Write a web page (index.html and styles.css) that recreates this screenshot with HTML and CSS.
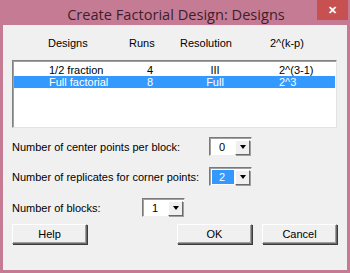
FILE: index.html
```html
<!DOCTYPE html>
<html lang="en">
<head>
  <meta charset="UTF-8" />
  <title>Create Factorial Design: Designs</title>
  <link rel="stylesheet" href="styles.css">
</head>
<body>
  <div class="window">
    <div class="titlebar">
      <span class="title">Create Factorial Design: Designs</span>
      <span class="close">✕</span>
    </div>
    <div class="client">
      <div class="cols head">
        <span class="c1">Designs</span>
        <span class="c2">Runs</span>
        <span class="c3">Resolution</span>
        <span class="c4">2^(k-p)</span>
      </div>
      <div class="listbox">
        <div class="cols row">
          <span class="r1">1/2 fraction</span>
          <span class="r2">4</span>
          <span class="r3">III</span>
          <span class="r4">2^(3-1)</span>
        </div>
        <div class="cols row selected">
          <span class="r1">Full factorial</span>
          <span class="r2">8</span>
          <span class="r3">Full</span>
          <span class="r4">2^3</span>
        </div>
      </div>

      <div class="field f-center">
        <label>Number of center points per block:</label>
        <div class="combo"><span class="val">0</span><span class="arrow"></span></div>
      </div>
      <div class="field f-repl">
        <label>Number of replicates for corner points:</label>
        <div class="combo"><span class="val picked">2</span><span class="arrow"></span></div>
      </div>
      <div class="field f-blocks">
        <label>Number of blocks:</label>
        <div class="combo"><span class="val">1</span><span class="arrow"></span></div>
      </div>

      <div class="buttons">
        <button class="btn">Help</button>
        <span class="spacer"></span>
        <button class="btn">OK</button>
        <button class="btn">Cancel</button>
      </div>
    </div>
  </div>
</body>
</html>
```

FILE: styles.css
```css
body {
  margin: 0;
  font-family: "Liberation Sans", Arial, sans-serif;
  font-size: 11px;
  color: #000;
}
.window {
  width: 350px;
  height: 273px;
  background-color: #c67b95;
  overflow: hidden;
}
.titlebar {
  height: 25px;
  position: relative;
  display: flex;
  justify-content: center;
  align-items: center;
}
.title {
  font-family: "Open Sans", sans-serif;
  font-size: 14.6px;
  color: #3d1f2c;
  margin-top: 3px;
  margin-left: 2px;
}
.close {
  position: absolute;
  right: 2px;
  top: 0;
  width: 31px;
  height: 20px;
  background-color: #c75050;
  color: #fff;
  font-size: 11px;
  font-weight: bold;
  display: flex;
  justify-content: center;
  align-items: center;
}
.client {
  margin: 0 3px;
  height: 245px;
  background-color: #f0f0f0;
  padding: 0 10px 0 9px;
  box-sizing: border-box;
}
.cols {
  display: flex;
  white-space: nowrap;
}
.head {
  height: 35px;
  align-items: center;
  padding-top: 1px;
  box-sizing: border-box;
}
.head .c1 { width: 81px; padding-left: 36px; }
.head .c2 { width: 51px; }
.head .c3 { width: 90px; }
.listbox {
  height: 68px;
  background-color: #fff;
  border: 1px solid #828282;
  border-right-color: #e3e3e3;
  border-bottom-color: #e3e3e3;
  box-shadow: inset 1px 1px 0 #a0a0a0;
  padding: 3px 1px 0 1px;
  box-sizing: border-box;
}
.row {
  height: 12px;
  line-height: 12px;
}
.row.selected {
  background-color: #3399ff;
  color: #fff;
}
.row .r1 { width: 131px; padding-left: 35px; box-sizing: border-box; }
.row .r2 { width: 10px; text-align: center; }
.row .r3 { width: 120px; text-align: center; }
.row .r4 { padding-left: 4px; }
.field {
  display: flex;
  align-items: center;
  white-space: nowrap;
}
.field label {
  width: 197px;
}
.f-center { margin-top: 9px; }
.f-repl { margin-top: 11px; }
.f-blocks { margin-top: 12px; }
.f-blocks label { width: 130px; }
.combo {
  width: 43px;
  height: 19px;
  box-sizing: border-box;
  background-color: #fff;
  border: 1px solid #7a7a7a;
  border-right-color: #f0f0f0;
  border-bottom-color: #f0f0f0;
  box-shadow: inset 1px 1px 0 #a0a0a0;
  display: flex;
  align-items: center;
  padding: 2px 1px 1px 2px;
}
.val {
  flex: 1;
  height: 100%;
  display: flex;
  align-items: center;
  padding-left: 7px;
}
.val.picked {
  background-color: #3399ff;
  color: #fff;
  margin-right: 1px;
}
.arrow {
  width: 15px;
  height: 15px;
  box-sizing: border-box;
  background-color: #f0f0f0;
  border: 1px solid #fff;
  border-right-color: #696969;
  border-bottom-color: #696969;
  box-shadow: 1px 1px 0 #a0a0a0;
  display: flex;
  justify-content: center;
  align-items: center;
}
.arrow::after {
  content: "";
  border-left: 3px solid transparent;
  border-right: 3px solid transparent;
  border-top: 4px solid #000;
}
.buttons {
  display: flex;
  margin-top: 7px;
  gap: 10px;
}
.spacer { flex: 1; }
.btn {
  width: 75px;
  height: 20px;
  font-family: "Liberation Sans", Arial, sans-serif;
  font-size: 11px;
  background-color: #f0f0f0;
  border: 1px solid #fff;
  border-right-color: #696969;
  border-bottom-color: #696969;
  box-shadow: 1px 1px 0 #3c3c3c, inset -1px -1px 0 #a0a0a0;
  padding: 0;
}
```
